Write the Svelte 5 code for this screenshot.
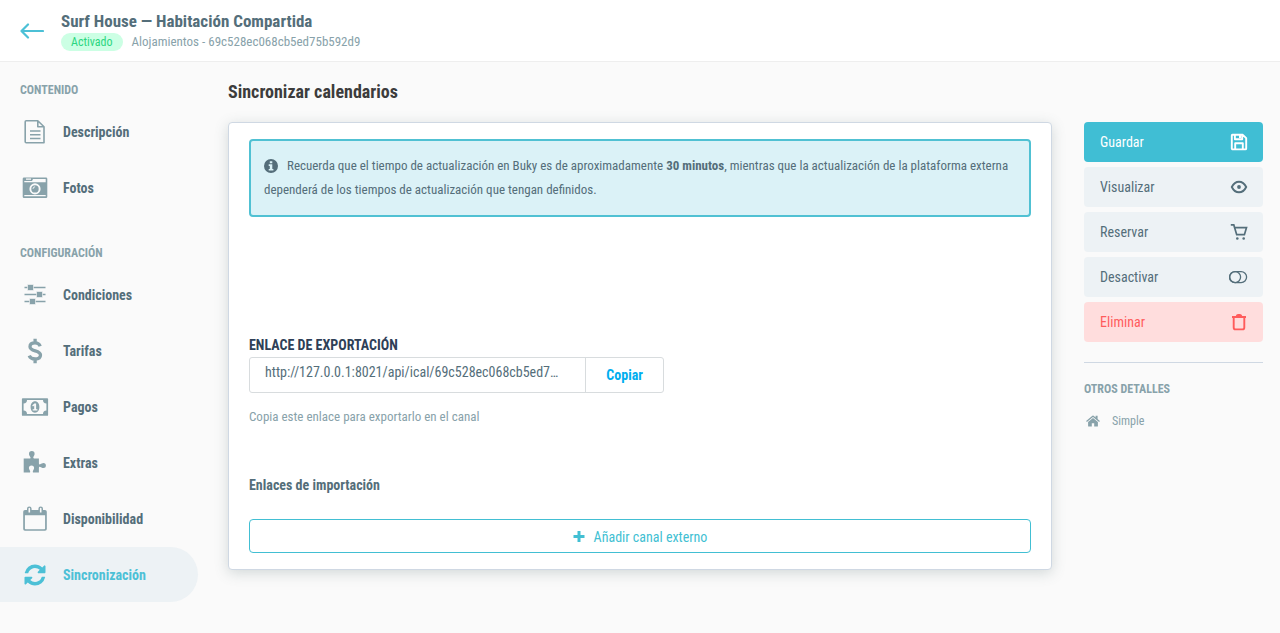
<script>
  const exportUrl = 'http://127.0.0.1:8021/api/ical/69c528ec068cb5ed75b592d9';
  const listingId = '69c528ec068cb5ed75b592d9';

  const sections = [
    {
      title: 'Contenido',
      items: [
        { label: 'Descripción', icon: 'file' },
        { label: 'Fotos', icon: 'camera' }
      ]
    },
    {
      title: 'Configuración',
      items: [
        { label: 'Condiciones', icon: 'sliders' },
        { label: 'Tarifas', icon: 'dollar' },
        { label: 'Pagos', icon: 'money' },
        { label: 'Extras', icon: 'puzzle' },
        { label: 'Disponibilidad', icon: 'calendar' },
        { label: 'Sincronización', icon: 'sync' }
      ]
    }
  ];

  const actions = [
    { label: 'Guardar', icon: 'save', kind: 'primary' },
    { label: 'Visualizar', icon: 'eye', kind: '' },
    { label: 'Reservar', icon: 'cart', kind: '' },
    { label: 'Desactivar', icon: 'toggle', kind: '' },
    { label: 'Eliminar', icon: 'trash', kind: 'danger' }
  ];

  let current = $state('Sincronización');

  const copyLink = () => {
    navigator.clipboard?.writeText(exportUrl);
  };
</script>

{#snippet menuIcon(name)}
  <svg class="menu-icon" viewBox="0 0 26 26" fill="currentColor" aria-hidden="true">
    {#if name == 'file'}
      <path d="M4.2 1.7h11.600l6.200 6v16.100H4.200a1 1 0 0 1-1-1V2.700a1 1 0 0 1 1-1zM15.800 1.700v6h6" fill="none" stroke="currentColor" stroke-width="1.600" stroke-linejoin="round" />
      <path d="M8 12h10.500M8 15.800h10.500M8 19.500h10.500" stroke="currentColor" stroke-width="1.500" />
    {:else if name == 'camera'}
      <path fill-rule="evenodd" d="M2 2.500h22a1.300 1.300 0 0 1 1.300 1.300v17.900A1.300 1.300 0 0 1 24 23H2A1.300 1.300 0 0 1 .7 21.700V3.800A1.300 1.300 0 0 1 2 2.500zM2.300 6v1.200h21.400V4.100H11L10 6zM4 3.500v1.200h5V3.500zM2.300 20v1.300h21.400V20zM13 8.300a5.600 5.600 0 1 0 0 11.200 5.600 5.600 0 0 0 0-11.200zm0 1.900a3.700 3.700 0 1 1 0 7.400 3.700 3.700 0 0 1 0-7.400z" />
      <circle cx="13" cy="13.900" r="2.900" />
      <path d="M11 13.900a2.100 2.100 0 0 1 2.100-2.100" fill="none" stroke="#fafafa" stroke-width=".9" />
    {:else if name == 'sliders'}
      <path d="M2.500 5.500h21M2.500 12.500h21M2.500 19.500h21" stroke="currentColor" stroke-width="1.600" />
      <path stroke="#fafafa" stroke-width=".6" d="M5.500 2.500h6v6h-6zM14.500 9.500h6v6h-6zM7.500 16.500h6v6h-6z" />
    {:else if name == 'dollar'}
      <path d="M18.200 8.300C17.400 6 15.500 4.900 13 4.900c-3 0-5 1.500-5 3.800 0 5.200 10.500 3 10.500 8.300 0 2.500-2.200 4-5.400 4-2.800 0-5-1.100-5.900-3.400M13.100.8v4.500M13.100 20.500v4.700" fill="none" stroke="currentColor" stroke-width="3.300" />
    {:else if name == 'money'}
      <path fill-rule="evenodd" d="M.8 4.200h24.400a.9.900 0 0 1 .9.900v15.800a.9.900 0 0 1-.9.900H.8a.9.900 0 0 1-.9-.9V5.100a.9.900 0 0 1 .9-.9zM5 6a3.500 3.500 0 0 1-3.400 3.500v7A3.500 3.500 0 0 1 5 20h16a3.500 3.500 0 0 1 3.400-3.500v-7A3.500 3.500 0 0 1 21 6z" />
      <path fill-rule="evenodd" d="M13 7.300c-2.700 0-4.400 2.600-4.400 5.700s1.700 5.700 4.400 5.700 4.400-2.600 4.400-5.700-1.700-5.700-4.400-5.700zm-.7 2.200h1.800v5.700h1.300v1.300h-4.700v-1.300h1.500v-3.600l-1.200.8-.8-1z" />
    {:else if name == 'puzzle'}
      <path d="M1.700 8.500h5.900c.9 0 1.100-.5.800-1.300C7.600 5.800 7 5.100 7 3.900a2.800 2.800 0 0 1 5.600 0c0 1.200-.8 2-1.200 3.200-.3.900 0 1.400.8 1.400h4.700v4.700c0 1 .4 1.400 1.300 1.100 1.300-.4 2-1.200 3.200-1.200a2.500 2.500 0 0 1 0 5c-1.200 0-1.900-.8-3.200-1.200-.9-.3-1.300.1-1.300 1.100v4.500h-5.200c-.8 0-1.100-.4-.8-1.300.4-1.200 1.200-1.900 1.200-3.100a2.600 2.600 0 0 0-5.200 0c0 1.200.8 1.900 1.200 3.100.3.900 0 1.300-.8 1.300H1.700z" />
    {:else if name == 'calendar'}
      <path fill-rule="evenodd" d="M3 4h2V2.800a2.300 2.300 0 0 1 4.600 0V4h6.800V2.800a2.300 2.300 0 0 1 4.600 0V4h2a1.800 1.800 0 0 1 1.800 1.800V23a1.800 1.800 0 0 1-1.800 1.800H3A1.800 1.800 0 0 1 1.200 23V5.800A1.800 1.800 0 0 1 3 4zm-.1 5.300v13.200c0 .4.300.7.700.7h18.800c.4 0 .7-.3.700-.7V9.300zM6.500 2.500v4h1.600v-4c0-1-1.600-1-1.600 0zm11.400 0v4h1.600v-4c0-1-1.600-1-1.600 0z" />
    {:else if name == 'sync'}
      <path transform="translate(2.500 2.500) scale(.01367)" d="M1511 928q0 5-1 7-64 268-268 434.500T764 1536q-146 0-282.500-55T238 1324l-129 129q-19 19-45 19t-45-19-19-45V960q0-26 19-45t45-19h448q26 0 45 19t19 45-19 45l-137 137q71 66 161 102t187 36q134 0 250-65t186-179q11-17 53-117 8-23 30-23h192q13 0 22.500 9.500t9.500 22.500zm25-800v448q0 26-19 45t-45 19h-448q-26 0-45-19t-19-45 19-45l138-138Q969 256 768 256q-134 0-250 65T332 500q-11 17-53 117-8 23-30 23H50q-13 0-22.500-9.500T18 608v-7q65-268 270-434.500T768 0q146 0 284 55.500T1297 212l130-129q19-19 45-19t45 19 19 45z" />
    {/if}
  </svg>
{/snippet}

{#snippet actionIcon(name)}
  <svg class="action-icon" viewBox="0 0 20 20" fill="none" stroke="currentColor" stroke-width="1.900" aria-hidden="true">
    {#if name == 'save'}
      <path d="M3.500 2.800h10.300l3.400 3.400v10.300a.9.900 0 0 1-.9.900H3.700a.9.900 0 0 1-.9-.9V3.600a.8.800 0 0 1 .7-.8zM5.900 3v4.300h7.300V3M6.200 17v-5.800h7.600V17" stroke-linejoin="round" />
      <path d="M11 3v3" stroke-width="2" />
    {:else if name == 'eye'}
      <path d="M2.800 10C4.600 6.300 7 4.700 10 4.700s5.400 1.600 7.200 5.300c-1.800 3.700-4.200 5.300-7.200 5.300S4.600 13.700 2.800 10z" />
      <circle cx="10" cy="10" r="1.900" fill="currentColor" stroke="none" />
    {:else if name == 'cart'}
      <path d="M1.800 2.900h3l2.900 9.800h7.700l2.100-7H5.600" stroke-width="1.700" />
      <circle cx="8.300" cy="16.500" r="1.300" fill="currentColor" stroke="none" />
      <circle cx="14.700" cy="16.500" r="1.300" fill="currentColor" stroke="none" />
    {:else if name == 'toggle'}
      <rect x=".6" y="4.600" width="17" height="11" rx="5.500" stroke-width="1.300" />
      <circle cx="6.100" cy="10.100" r="5.500" stroke-width="1.300" />
    {:else if name == 'trash'}
      <path d="M4.700 5.500v10c0 1.200.7 1.900 1.900 1.900h6.800c1.200 0 1.900-.7 1.900-1.900v-10M3 5h14M7.700 5c0-1.400.6-2 1.600-2h1.400c1 0 1.600.6 1.600 2" />
    {/if}
  </svg>
{/snippet}

<div class="page">
  <header class="topbar">
    <a class="back" href="#alojamientos" aria-label="Volver">
      <svg viewBox="0 0 24 16" fill="none" stroke="currentColor" stroke-width="2.200" stroke-linecap="round" stroke-linejoin="round" aria-hidden="true">
        <path d="M23 8H1.500M8 1.500L1.500 8 8 14.500" />
      </svg>
    </a>
    <div>
      <h1>Surf House — Habitación Compartida</h1>
      <div class="meta">
        <span class="badge">Activado</span>
        <span>Alojamientos - {listingId}</span>
      </div>
    </div>
  </header>

  <div class="layout">
    <nav class="sidebar">
      {#each sections as section}
        <section>
          <h2 class="caption">{section.title}</h2>
          {#each section.items as item}
            <a
              href="#{item.icon}"
              class="menu-item"
              class:active={current == item.label}
              onclick={() => (current = item.label)}
            >
              {@render menuIcon(item.icon)}
              {item.label}
            </a>
          {/each}
        </section>
      {/each}
    </nav>

    <main>
      <h2 class="title">Sincronizar calendarios</h2>
      <div class="card">
        <p class="alert">
          <svg class="info" viewBox="0 0 14 14" aria-hidden="true">
            <path fill="currentColor" fill-rule="evenodd" d="M7 0a7 7 0 1 0 0 14A7 7 0 0 0 7 0zM5.800 2.200h2.500v2H5.800zM4.700 5.300h3.600v4.600h1.100v1.600H4.700V9.900h1.100V6.900H4.700z" />
          </svg>
          Recuerda que el tiempo de actualización en Buky es de aproximadamente <strong>30 minutos</strong>, mientras que la actualización de la plataforma externa dependerá de los tiempos de actualización que tengan definidos.
        </p>

        <div class="export">
          <h3 class="export-title">Enlace de exportación</h3>
          <div class="export-group">
            <span class="export-url">{exportUrl}</span>
            <button class="copy" type="button" onclick={copyLink}>Copiar</button>
          </div>
          <p class="hint">Copia este enlace para exportarlo en el canal</p>
        </div>

        <h3 class="import-title">Enlaces de importación</h3>
        <button class="add" type="button">
          <svg viewBox="0 0 12 12" fill="currentColor" aria-hidden="true">
            <path d="M4.500 0h3v4h4v3h-4v4h-3v-4h-4v-3h4z" />
          </svg>
          Añadir canal externo
        </button>
      </div>
    </main>

    <aside>
      <div class="actions">
        {#each actions as action}
          <button type="button" class="action {action.kind}">
            {action.label}
            {@render actionIcon(action.icon)}
          </button>
        {/each}
      </div>
      <div class="details">
        <h2 class="caption">Otros detalles</h2>
        <p class="detail">
          <svg viewBox="0 0 14 12" fill="currentColor" aria-hidden="true">
            <path d="M7 2.900l4.900 4.100v4.100a.5.500 0 0 1-.5.500H8.200V8.300H5.800v3.300H2.600a.5.500 0 0 1-.5-.5V7z" />
            <path d="M.1 6L6.400.7a1 1 0 0 1 1.200 0l2 1.700V.8h2v3.300L13.900 6l-.8.900L7 1.900.9 6.900z" />
          </svg>
          Simple
        </p>
      </div>
    </aside>
  </div>
</div>

<style>
  :global(body) {
    background: #fafafa;
    color: #546e7a;
    font-family: "Roboto Condensed", "Liberation Sans Narrow", Roboto, sans-serif;
    font-size: 14px;
    line-height: 20px;
  }

  h1, h2, h3, p {
    margin: 0;
  }

  a {
    text-decoration: none;
  }

  button {
    font: inherit;
    cursor: pointer;
  }

  .topbar {
    display: flex;
    align-items: center;
    gap: 17px;
    padding: 10px 20px;
    background: #fff;
    border-bottom: 1px solid #eee;
  }

  .back {
    color: #4cc0d6;
  }

  .back svg {
    display: block;
    width: 24px;
    height: 16px;
  }

  h1 {
    font-size: 17px;
    line-height: 22px;
  }

  .meta {
    display: flex;
    align-items: center;
    gap: 9px;
    font-size: 13px;
    line-height: 19px;
    color: #88a2aa;
  }

  .badge {
    padding: 0 10px;
    border-radius: 10px;
    background: #ccffe4;
    color: #2bd680;
    font-size: 12px;
    line-height: 18px;
  }

  .layout {
    display: grid;
    grid-template-columns: 198px minmax(0, 1fr) 179px;
    padding-right: 17px;
  }

  .sidebar {
    display: flex;
    flex-direction: column;
    gap: 27px;
    padding: 18px 0 30px;
  }

  .caption {
    color: #88a2aa;
    font-size: 12px;
    text-transform: uppercase;
  }

  .sidebar .caption {
    padding: 0 20px;
    margin-bottom: 4px;
  }

  .menu-item {
    display: flex;
    align-items: center;
    gap: 15px;
    height: 55px;
    margin-bottom: 1px;
    padding-left: 22px;
    border-radius: 0 28px 28px 0;
    color: #546e7a;
    font-weight: bold;
  }

  .menu-icon {
    width: 26px;
    height: 26px;
    color: #88a2aa;
    overflow: visible;
  }

  .active {
    background: #edf2f5;
  }

  .active,
  .active .menu-icon {
    color: #4cc0d6;
  }

  main {
    padding: 18px 32px 30px 30px;
  }

  .title {
    margin-bottom: 18px;
    color: #3c3c3c;
    font-size: 18px;
    line-height: 24px;
  }

  .card {
    padding: 16px 20px;
    background: #fff;
    border: 1px solid #cfd8e3;
    border-radius: 4px;
    box-shadow: 0 3px 14px rgba(84, 110, 110, 0.24);
  }

  .alert {
    padding: 13px;
    border: 2px solid #50c1d3;
    border-radius: 4px;
    background: #dbf2f7;
    font-size: 13px;
    line-height: 24px;
  }

  .info {
    width: 14px;
    height: 14px;
    margin-right: 6px;
    vertical-align: -3px;
  }

  .export {
    margin: 118px 0 48px;
  }

  .export-title {
    margin-bottom: 2px;
    color: #2e4057;
    font-size: 14px;
    text-transform: uppercase;
  }

  .export-group {
    display: flex;
    max-width: 415px;
    border: 1px solid #d8dcde;
    border-radius: 3px;
    box-sizing: border-box;
  }

  .export-url {
    flex: 1;
    min-width: 0;
    padding: 4px 26px 10px 15px;
    overflow: hidden;
    text-overflow: ellipsis;
    white-space: nowrap;
  }

  .copy {
    padding: 0 20px;
    border: 0;
    border-left: 1px solid #d8dcde;
    background: none;
    color: #00aeef;
    font-weight: bold;
  }

  .hint {
    margin-top: 14px;
    color: #88a2aa;
    font-size: 13px;
  }

  .import-title {
    margin-bottom: 24px;
    font-size: 14px;
  }

  .add {
    display: flex;
    align-items: center;
    justify-content: center;
    gap: 9px;
    width: 100%;
    height: 34px;
    padding: 2px 0 0;
    border: 1px solid #42bfd3;
    border-radius: 4px;
    background: #fff;
    color: #42bfd3;
  }

  .add svg {
    width: 12px;
    height: 12px;
  }

  aside {
    padding-top: 60px;
  }

  .actions {
    display: flex;
    flex-direction: column;
    gap: 5px;
    padding-bottom: 20px;
    border-bottom: 1px solid #cfd8e3;
  }

  .action {
    display: flex;
    align-items: center;
    justify-content: space-between;
    height: 40px;
    padding: 0 14px 0 16px;
    border: 0;
    border-radius: 4px;
    background: #edf2f5;
    color: #546e7a;
  }

  .primary {
    background: #40bed4;
    color: #fff;
  }

  .danger {
    background: #ffdddd;
    color: #ff5c5c;
  }

  .action-icon {
    width: 20px;
    height: 20px;
  }

  .details {
    padding-top: 16px;
  }

  .detail {
    display: flex;
    align-items: center;
    gap: 12px;
    margin-top: 12px;
    padding-left: 2px;
    color: #88a2aa;
    font-size: 12px;
  }

  .detail svg {
    width: 14px;
    height: 12px;
  }
</style>
